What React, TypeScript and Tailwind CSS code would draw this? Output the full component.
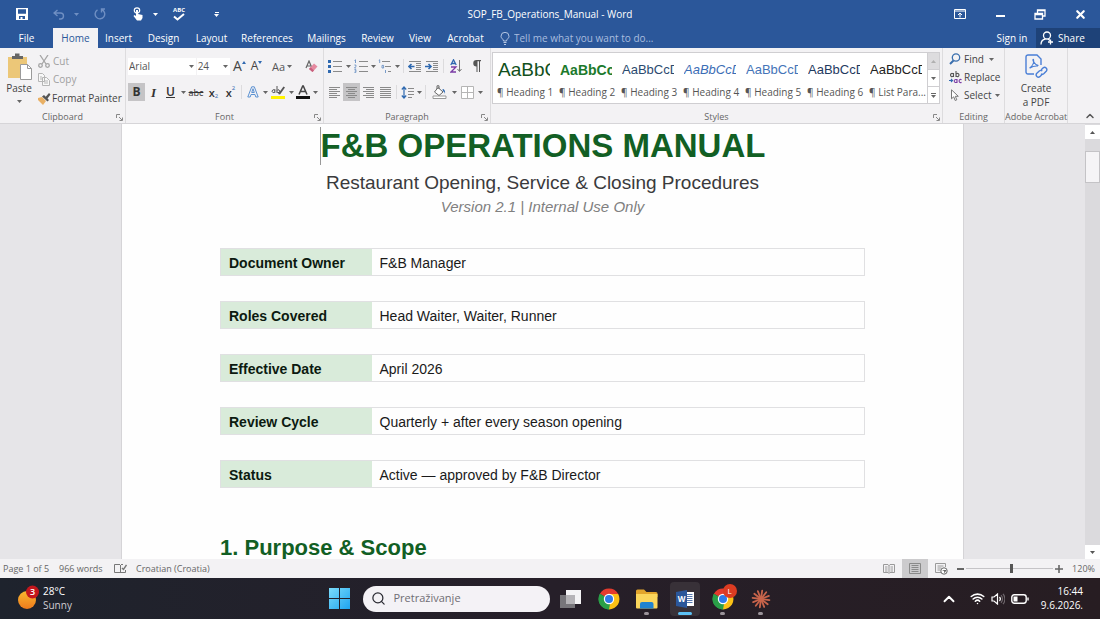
import React from "react";
import clsx from "clsx";
import { ChevronUp, Search, Wifi, X } from "lucide-react";

const tabs = [
  { name: "File", width: "w-[53px]" },
  { name: "Home", width: "w-[45px]" },
  { name: "Insert", width: "w-[41px]" },
  { name: "Design", width: "w-[49px]" },
  { name: "Layout", width: "w-[47px]" },
  { name: "References", width: "w-[64px]" },
  { name: "Mailings", width: "w-[55px]" },
  { name: "Review", width: "w-[47px]" },
  { name: "View", width: "w-[38px]" },
  { name: "Acrobat", width: "w-[53px]" },
];

const styleGallery = [
  { name: "Heading 1", preview: "AaBbCc", look: "text-[19px] text-[#12501c]" },
  { name: "Heading 2", preview: "AaBbCc", look: "text-[14px] font-bold text-[#1c7a2c]" },
  { name: "Heading 3", preview: "AaBbCcDd", look: "text-[13px] text-[#2b4a6f]" },
  { name: "Heading 4", preview: "AaBbCcDd", look: "text-[13px] italic text-[#3a6db5]" },
  { name: "Heading 5", preview: "AaBbCcDd", look: "text-[13px] text-[#4474b8]" },
  { name: "Heading 6", preview: "AaBbCcDd", look: "text-[13px] text-[#1f3a5f]" },
  { name: "List Para...", preview: "AaBbCcDd", look: "text-[13px] text-[#222222]" },
];

const details = [
  { label: "Document Owner", value: "F&B Manager" },
  { label: "Roles Covered", value: "Head Waiter, Waiter, Runner" },
  { label: "Effective Date", value: "April 2026" },
  { label: "Review Cycle", value: "Quarterly + after every season opening" },
  { label: "Status", value: "Active — approved by F&B Director" },
];

type ToolProps = {
  label: string;
  className?: string;
  active?: boolean;
  children: React.ReactNode;
};

const Tool = ({ label, className = "w-[17px]", active, children }: ToolProps) => (
  <button
    aria-label={label}
    aria-pressed={active}
    className={clsx(
      "flex h-[18px] shrink-0 items-center justify-center leading-none",
      active && "bg-[#c5c4c6]",
      className,
    )}
  >
    {children}
  </button>
);

const Caret = ({ className = "text-[#666666]" }: { className?: string }) => (
  <svg width="5" height="3" viewBox="0 0 5 3" className={clsx("shrink-0", className)}>
    <path d="M0 0h5L2.5 3z" fill="currentColor" />
  </svg>
);

const Drop = ({ label }: { label: string }) => (
  <Tool label={label} className="w-2">
    <Caret />
  </Tool>
);

const Divider = ({ className = "mx-[3px]" }: { className?: string }) => (
  <span className={clsx("h-3.5 w-px shrink-0 bg-[#dcdbdd]", className)} />
);

type GroupProps = {
  name: string;
  className?: string;
  launcher?: boolean;
  children: React.ReactNode;
};

const Group = ({ name, className, launcher, children }: GroupProps) => (
  <section
    aria-label={name}
    className={clsx("flex flex-col border-r border-[#dddcde]", className)}
  >
    <div className="flex-1">{children}</div>
    <div className="flex h-3 items-center text-[9px] leading-3 text-[#666666]">
      {launcher ? <span className="w-3" /> : null}
      <span className="flex-1 text-center whitespace-nowrap">{name}</span>
      {launcher ? (
        <button aria-label={`${name} settings`} className="flex w-3 justify-center">
          <svg width="7" height="7" viewBox="0 0 7 7" fill="none" stroke="#888888">
            <path d="M.5 4V.5H4M3 3l3 3M6.5 3.5v3h-3" />
          </svg>
        </button>
      ) : null}
    </div>
  </section>
);

type LinesProps = { rows: [number, number][] };

// Each row is the start and end of one text line, 2px apart.
const Lines = ({ rows }: LinesProps) => (
  <svg width="13" height="13" viewBox="0 0 13 13" stroke="#8a8a8a">
    {rows.map(([from, to], i) => (
      <path key={i} d={`M${from} ${i * 2 + 1.5}H${to}`} />
    ))}
  </svg>
);

const ListIcon = ({ kind }: { kind: "bullet" | "number" | "multi" }) => (
  <svg width="14" height="14" viewBox="0 0 14 14">
    {kind === "multi" ? (
      <path d="M4 2.5h8M7 7.5h6M10 12.5h3" stroke="#8a8a8a" />
    ) : (
      <path d="M5 2.5h9M5 7.5h9M5 12.5h9" stroke="#8a8a8a" />
    )}
    {kind === "bullet" ? (
      <path d="M0 1h3v3H0zM0 6h3v3H0zM0 11h3v3H0z" fill="#2f69b0" />
    ) : null}
    {kind === "number" ? (
      <path
        d="M.5 1.5l1-.7V4M.4 6h1.5v1.4L.5 9h1.6M.4 10.6h1.5V13.4H.4M.8 12h1"
        fill="none"
        stroke="#5b87bf"
        strokeWidth=".8"
      />
    ) : null}
    {kind === "multi" ? (
      <path
        d="M.8 1.3l.9-.5V4M4 6.4h1.6V9H4zM7.5 11v3"
        fill="none"
        stroke="#5b87bf"
        strokeWidth=".8"
      />
    ) : null}
  </svg>
);

const IndentIcon = ({ increase }: { increase?: boolean }) => (
  <svg width="14" height="13" viewBox="0 0 14 13" fill="none">
    <path d="M1 1.5h12M8 3.5h5M8 5.5h5M8 7.5h5M8 9.5h5M1 11.5h12" stroke="#8a8a8a" />
    <path
      d={increase ? "M0 6.5h5.5M3.5 4l2.5 2.5L3.5 9" : "M1 6.5h5.5M3.5 4L1 6.5 3.5 9"}
      stroke="#2f69b0"
      strokeWidth="1.6"
    />
  </svg>
);

const ChromeIcon = () => (
  <svg width="22" height="22" viewBox="0 0 22 22">
    <path d="M11 11L1.9 5.8A10.5 10.5 0 0 1 20.1 5.8z" fill="#e33b2e" />
    <path d="M11 11L20.1 5.8A10.5 10.5 0 0 1 11 21.5z" fill="#fbc116" />
    <path d="M11 11v10.5A10.5 10.5 0 0 1 1.9 5.8z" fill="#2a9f48" />
    <path d="M11 6h9.2L15.5 13.5 11 21.5 13 15z" fill="#fbc116" />
    <path d="M1.9 5.8L6.6 13.5 12 16 11 21.5A10.5 10.5 0 0 1 1.9 5.8z" fill="#2a9f48" />
    <circle cx="11" cy="11" r="5.2" fill="#fff" />
    <circle cx="11" cy="11" r="4" fill="#2f7be8" />
  </svg>
);

const TitleBar = () => (
  <header className="flex h-7 items-center text-white">
    <div className="flex flex-1 items-center">
      <button aria-label="Save" className="flex w-11 justify-center">
        <svg width="12" height="12" viewBox="0 0 12 12">
          <path
            d="M0 0h12v12H0zM2 1.2v4.6h8V1.2zM3 8v3h1.5V9h2v2H9V8z"
            fill="#fff"
            fillRule="evenodd"
          />
        </svg>
      </button>
      <button aria-label="Undo" className="flex w-[30px] justify-center text-[#6f8fc3]">
        <svg width="12" height="11" viewBox="0 0 12 11" fill="none" stroke="currentColor" strokeWidth="1.4">
          <path d="M4.5 1L1 4l3.5 3M1 4h6.5a3 3 0 0 1 0 6H6" />
        </svg>
      </button>
      <Caret className="text-[#6f8fc3]" />
      <button aria-label="Repeat" className="ml-1.5 flex w-[30px] justify-center text-[#6f8fc3]">
        <svg width="12" height="12" viewBox="0 0 12 12" fill="none" stroke="currentColor" strokeWidth="1.4">
          <path d="M7.5 1.5a4.8 4.8 0 1 1-4 .4M7.5 4.5V1H11" />
        </svg>
      </button>
      <button aria-label="Touch mode" className="ml-2 flex w-[30px] justify-center">
        <svg width="13" height="14" viewBox="0 0 13 14">
          <circle cx="5" cy="3.5" r="2.7" fill="none" stroke="#fff" strokeWidth="1.2" />
          <path d="M4 3h2v4l4.5 1v3L9 13.5H5L1.5 9l1-1L4 9z" fill="#fff" />
        </svg>
      </button>
      <Caret className="text-white" />
      <button aria-label="Spelling" className="ml-1.5 flex w-[30px] flex-col items-center">
        <span className="text-[6px] leading-[6px] font-bold">ABC</span>
        <svg width="12" height="8" viewBox="0 0 12 8" fill="none" stroke="#fff" strokeWidth="2">
          <path d="M1 3.5l3.5 3L11 1" />
        </svg>
      </button>
      <button aria-label="Customize toolbar" className="ml-5 flex flex-col items-center gap-px">
        <span className="h-px w-1 bg-white" />
        <Caret className="text-white" />
      </button>
    </div>
    <h1 className="text-[10px] font-medium">SOP_FB_Operations_Manual - Word</h1>
    <div className="flex flex-1 items-center justify-end">
      <button aria-label="Ribbon display options" className="flex w-10 justify-center">
        <svg width="12" height="10" viewBox="0 0 12 10" fill="none" stroke="#fff">
          <path d="M.5 .5h11v9H.5zM.5 2h11M6 8.500V4M4 6l2-2 2 2" />
        </svg>
      </button>
      <button aria-label="Minimize" className="flex w-10 justify-center">
        <span className="mt-1 h-0.5 w-[9px] bg-white" />
      </button>
      <button aria-label="Restore" className="flex w-10 justify-center">
        <svg width="12" height="11" viewBox="0 0 12 11" fill="none" stroke="#fff" strokeWidth="1.3">
          <path d="M1 4.5h7.5V10H1zM3.5 4V1H11v6H8.5M1 5.5h7.5M3.5 1.7H11" />
        </svg>
      </button>
      <button aria-label="Close" className="flex w-10 justify-center">
        <X size={13} strokeWidth={4} />
      </button>
    </div>
  </header>
);

const TabBar = () => (
  <nav className="flex h-5 items-stretch text-[10px] font-medium text-white">
    {tabs.map((tab) => (
      <button
        key={tab.name}
        className={clsx(
          "shrink-0 text-center",
          tab.width,
          tab.name === "Home" && "bg-[#f3f2f4] text-[#2b579a]",
        )}
      >
        {tab.name}
      </button>
    ))}
    <label className="ml-2 flex flex-1 items-center gap-1">
      <svg width="10" height="13" viewBox="0 0 10 13" fill="none" stroke="#b5c6e3" className="shrink-0">
        <path d="M3.5 9C3.5 7 1 6.5 1 4.3a4 4 0 0 1 8 0C9 6.5 6.5 7 6.5 9zM3.5 10.5h3M4 12.5h2" />
      </svg>
      <input
        aria-label="Tell me what you want to do"
        placeholder="Tell me what you want to do..."
        className="w-full font-normal outline-none placeholder:text-[#a9bddf]"
      />
    </label>
    <button className="w-12 text-center">Sign in</button>
    <button className="flex w-16 items-center gap-1 bg-[#1e4278] pl-1">
      <svg width="14" height="14" viewBox="0 0 14 14" fill="none" stroke="#fff" strokeWidth="1.3">
        <circle cx="7" cy="4.5" r="3.5" />
        <path d="M1 13.5c0-3 2-5 4.5-5.5M8 8l2 1.5M10.5 8.5v5M8 11h5" />
      </svg>
      Share
    </button>
  </nav>
);

const ClipboardGroup = () => (
  <Group name="Clipboard" launcher className="w-[126px]">
    <div className="flex pt-1">
      <button className="flex w-[38px] flex-col items-center text-[10px] leading-4 text-[#444444]">
        <svg width="26" height="27" viewBox="0 0 26 27" className="mt-px ml-0.5">
          <path d="M1 4h19v21H1z" fill="#ecc778" />
          <path d="M5 3h3V.5h4.5V3H16v3H5z" fill="#666666" />
          <path d="M13.5 11.5h7l4 4v11h-11z" fill="#fff" stroke="#9a9a9a" />
          <path d="M20.5 11.5v4h4" fill="none" stroke="#9a9a9a" />
        </svg>
        Paste
        <span className="flex h-2.5 items-center">
          <Caret />
        </span>
      </button>
      <div className="flex flex-col text-[10px] whitespace-nowrap text-[#a0a0a0]">
        <button className="flex h-[18px] items-center gap-[3px]">
          <svg width="12" height="13" viewBox="0 0 12 13" fill="none" stroke="#a5a5a5" strokeWidth="1.3">
            <path d="M2 0l6 9M10 0L4 9" />
            <circle cx="2.5" cy="10.5" r="1.8" />
            <circle cx="9.5" cy="10.5" r="1.8" />
          </svg>
          Cut
        </button>
        <button className="flex h-[19px] items-center gap-[3px]">
          <svg width="12" height="13" viewBox="0 0 12 13" fill="#f8f8f8" stroke="#b5b5b5">
            <path d="M.5 .5h4l2 2v6h-6zM4.5 4.5h4l3 3v5h-7zM6 8h4M6 10h4M2 4h2M2 6h2" />
          </svg>
          Copy
        </button>
        <button className="flex h-[19px] items-center gap-px text-[#444444]">
          <svg width="13" height="12" viewBox="0 0 13 12">
            <path d="M0 5l4-1 4 4-3 4-5-5z" fill="#e9b065" />
            <path d="M4 3.5L6 2l5 5-1.5 1.5zM7.5 4L11 0l1.5 1.500L9.5 5.5z" fill="#555555" />
          </svg>
          Format Painter
        </button>
      </div>
    </div>
  </Group>
);

const Picker = ({ label, value, className }: { label: string; value: string; className: string }) => (
  <span className={clsx("relative mr-px flex h-[17px] items-center bg-white", className)}>
    <select
      aria-label={label}
      className="h-full w-full appearance-none pl-px text-[10px] text-[#555555]"
    >
      <option>{value}</option>
    </select>
    <span className="pointer-events-none absolute right-0.5">
      <Caret />
    </span>
  </span>
);

const FontGroup = () => (
  <Group name="Font" launcher className="w-[198px]">
    <div className="flex h-[35px] items-center pt-px pl-0.5">
      <Picker label="Font" value="Arial" className="w-[69px]" />
      <Picker label="Font size" value="24" className="w-[34px]" />
      <Tool label="Grow font">
        <span className="text-[14px] text-[#444444]">A</span>
        <svg width="4" height="3" viewBox="0 0 4 3" className="mb-2">
          <path d="M0 3h4L2 0z" fill="#2f69b0" />
        </svg>
      </Tool>
      <Tool label="Shrink font">
        <span className="text-[12px] text-[#444444]">A</span>
        <svg width="4" height="3" viewBox="0 0 4 3" className="mb-2">
          <path d="M0 0h4L2 3z" fill="#2f69b0" />
        </svg>
      </Tool>
      <Tool label="Change case" className="w-[34px] gap-0.5">
        <span className="text-[11px] text-[#555555]">Aa</span>
        <Caret />
      </Tool>
      <Tool label="Clear formatting" className="w-6">
        <svg width="13" height="13" viewBox="0 0 13 13">
          <path d="M1 8l3-7 3 7M2 6h4" fill="none" stroke="#666666" strokeWidth="1.2" />
          <path d="M9 3.5l3.5 3-5 5.5L4 9z" fill="#e58aa0" />
          <path d="M5.5 7.3L9 10.4l-1.5 1.6L4 9z" fill="#c8607d" />
        </svg>
      </Tool>
    </div>
    <div className="flex items-center pl-0.5 text-[#333333]">
      <Tool label="Bold" active>
        <span className="text-[12px] font-bold">B</span>
      </Tool>
      <Tool label="Italic">
        <span className="font-['Liberation_Serif',serif] text-[13px] font-bold italic">I</span>
      </Tool>
      <Tool label="Underline">
        <span className="text-[12px] font-semibold underline">U</span>
      </Tool>
      <Drop label="Underline style" />
      <Tool label="Strikethrough" className="w-[18px]">
        <span className="text-[9px] line-through">abc</span>
      </Tool>
      <Tool label="Subscript">
        <span className="text-[11px] font-semibold">x</span>
        <span className="mt-2 text-[6px] text-[#2f69b0]">2</span>
      </Tool>
      <Tool label="Superscript">
        <span className="text-[11px] font-semibold">x</span>
        <span className="mb-2 text-[6px] text-[#2f69b0]">2</span>
      </Tool>
      <Divider className="mr-[3px] ml-0.5" />
      <Tool label="Text effects" className="w-4">
        <svg width="12" height="12" viewBox="0 0 12 12" fill="none" stroke="#5c92d2" strokeLinejoin="round">
          <path d="M.8 11L4.7 .8h2.6L11.2 11H8.8L8 8.5H4L3.2 11zM4.7 6.5h2.6L6 2.7z" />
        </svg>
      </Tool>
      <Drop label="Text effects menu" />
      <Tool label="Highlight" className="w-[18px]">
        <svg width="14" height="14" viewBox="0 0 14 14">
          <path d="M0 11h14v3H0z" fill="#fff200" />
          <path
            d="M3.8 4v4M3.8 6.8a1.4 1.4 0 1 1 0-1.200M6 1v7M6 6.8a1.4 1.4 0 1 0 0-1.200"
            fill="none"
            stroke="#555555"
          />
          <path d="M7 9l5.5-7.500 1.5 1L9 9.5z" fill="#555555" />
        </svg>
      </Tool>
      <Drop label="Highlight colour" />
      <Tool label="Font colour" className="w-4">
        <svg width="14" height="14" viewBox="0 0 14 14">
          <path d="M0 11h14v3H0z" fill="#111111" />
          <path d="M3 9.5L6.7 1h.6L11 9.5M4.5 6.5h5" fill="none" stroke="#444444" strokeWidth="1.5" />
        </svg>
      </Tool>
      <Drop label="Font colour menu" />
    </div>
  </Group>
);

const ParagraphGroup = () => (
  <Group name="Paragraph" launcher className="w-[167px]">
    <div className="flex h-[35px] items-center pt-px pl-0.5">
      <Tool label="Bullets" className="w-[18px]">
        <ListIcon kind="bullet" />
      </Tool>
      <Drop label="Bullet library" />
      <Tool label="Numbering">
        <ListIcon kind="number" />
      </Tool>
      <Drop label="Numbering library" />
      <Tool label="Multilevel list" className="w-4">
        <ListIcon kind="multi" />
      </Tool>
      <Drop label="List library" />
      <Divider className="mx-0.5" />
      <Tool label="Decrease indent">
        <IndentIcon />
      </Tool>
      <Tool label="Increase indent">
        <IndentIcon increase />
      </Tool>
      <Divider />
      <Tool label="Sort">
        <svg width="12" height="14" viewBox="0 0 12 14" fill="none">
          <path d="M.8 6L3.5 .8 6.2 6M1.5 4.5h4" stroke="#2f69b0" strokeWidth="1.3" />
          <path d="M1 8h5l-5 5h5" stroke="#7c3da5" strokeWidth="1.3" />
          <path d="M9.5 1v11M7.5 10l2 2.5 2-2.500" stroke="#777777" />
        </svg>
      </Tool>
      <Tool label="Show marks" className="w-6">
        <svg width="9" height="12" viewBox="0 0 9 12">
          <path d="M4 0h5v1.2H8V12H7V1.2H5.5V12h-1V6.5a3.2 3.2 0 0 1 0-6.500z" fill="#555555" />
        </svg>
      </Tool>
    </div>
    <div className="flex items-center pl-0.5">
      <Tool label="Align left">
        <Lines rows={[[1, 12], [1, 9], [1, 12], [1, 9], [1, 12], [1, 9]]} />
      </Tool>
      <Tool label="Centre" active>
        <Lines rows={[[1, 12], [3, 10], [1, 12], [3, 10], [1, 12], [3, 10]]} />
      </Tool>
      <Tool label="Align right">
        <Lines rows={[[1, 12], [4, 12], [1, 12], [4, 12], [1, 12], [4, 12]]} />
      </Tool>
      <Tool label="Justify">
        <Lines rows={[[1, 12], [1, 12], [1, 12], [1, 12], [1, 12], [1, 12]]} />
      </Tool>
      <Divider className="mx-0.5" />
      <Tool label="Line spacing" className="w-4">
        <svg width="13" height="13" viewBox="0 0 13 13" fill="none">
          <path
            d="M3 1v11M.8 3.5L3 1l2.2 2.5M.8 9.5L3 12l2.2-2.500"
            stroke="#2f69b0"
            strokeWidth="1.2"
          />
          <path d="M7 2.5h6M7 5.5h6M7 8.5h6M7 11.5h4" stroke="#8a8a8a" />
        </svg>
      </Tool>
      <Drop label="Line spacing menu" />
      <Divider className="mx-0.5" />
      <Tool label="Shading" className="w-[22px]">
        <svg width="15" height="14" viewBox="0 0 15 14">
          <path d="M1 11h13v2.5H1z" fill="#fff" stroke="#999999" />
          <path d="M6 2.5l5 4.5-4 3.5L2.5 7zM5 4V.8h2V4" fill="#fff" stroke="#666666" />
          <path d="M10.5 4c2 0 3 2 2.5 5-.5-2-1-2.500-2-2.500z" fill="#2f69b0" />
        </svg>
      </Tool>
      <Drop label="Shading menu" />
      <Tool label="Borders" className="w-[18px]">
        <svg width="13" height="13" viewBox="0 0 13 13" fill="#fff" stroke="#b5b5b5">
          <path d="M.5 .5h12v12H.5zM6.5 1v11M1 6.5h11" />
        </svg>
      </Tool>
      <Drop label="Borders menu" />
    </div>
  </Group>
);

const StylesGroup = () => (
  <Group name="Styles" launcher className="min-w-0 flex-1">
    <div className="mt-1 mr-0.5 ml-px flex h-[52px] border border-[#cfced1] bg-white">
      <div className="flex flex-1 overflow-hidden pl-1">
        {styleGallery.map((style) => (
          <button key={style.name} className="flex w-[62px] shrink-0 flex-col text-left">
            <span
              className={clsx(
                "ml-px h-[33px] w-[52px] overflow-hidden font-['Liberation_Sans',Arial,sans-serif] leading-[34px]",
                style.look,
              )}
            >
              {style.preview}
            </span>
            <span className="text-[10px] leading-3 whitespace-nowrap text-[#555555]">
              ¶ {style.name}
            </span>
          </button>
        ))}
      </div>
      <div className="flex w-3 flex-col divide-y divide-[#cfced1] border-l border-[#cfced1]">
        <button aria-label="Previous styles" className="flex flex-1 items-center justify-center bg-[#dddcde]">
          <Caret className="rotate-180 text-[#b0b0b0]" />
        </button>
        <button aria-label="Next styles" className="flex flex-1 items-center justify-center">
          <Caret />
        </button>
        <button aria-label="All styles" className="flex flex-1 flex-col items-center justify-center gap-px">
          <span className="h-px w-[5px] bg-[#666666]" />
          <Caret />
        </button>
      </div>
    </div>
  </Group>
);

const EditingGroup = () => (
  <Group name="Editing" className="w-[62px]">
    <div className="flex flex-col pt-0.5 pl-1.5 text-[10px] text-[#444444]">
      <button className="flex h-[18px] items-center gap-[3px]">
        <svg width="12" height="12" viewBox="0 0 12 12" fill="none" stroke="#3a6fae">
          <circle cx="7" cy="4.5" r="3.7" strokeWidth="1.3" />
          <path d="M4.5 7.5L1 11" strokeWidth="2" />
        </svg>
        Find
        <span className="ml-0.5">
          <Caret />
        </span>
      </button>
      <button className="flex h-[18px] items-center gap-0.5">
        <svg width="13" height="14" viewBox="0 0 13 14" fill="none" strokeWidth="1.1">
          <path
            d="M4.500 3v4M4.500 5.800a1.600 1.600 0 1 1 0-1.600M7 1v6M7 5.800a1.600 1.600 0 1 0 0-1.600"
            stroke="#555555"
          />
          <path
            d="M8 9v4M8 11.800a1.500 1.500 0 1 1 0-1.600M12.500 9.800a1.500 1.500 0 1 0 0 2.400"
            stroke="#7c3da5"
          />
          <path d="M0 10.500h3M2 9l1.500 1.500L2 12" stroke="#2f69b0" />
        </svg>
        Replace
      </button>
      <button className="flex h-[18px] items-center gap-[3px]">
        <svg width="12" height="12" viewBox="0 0 12 12" fill="#fff" stroke="#777777">
          <path d="M2.5 .8v9l2.2-2 1.5 3.7 1.6-.7-1.500-3.500h3z" />
        </svg>
        Select
        <Caret />
      </button>
    </div>
  </Group>
);

const AcrobatGroup = () => (
  <Group name="Adobe Acrobat" className="w-[63px]">
    <button className="flex w-full flex-col items-center pt-1.5 text-[10px] leading-[14px] text-[#444444]">
      <svg
        width="23"
        height="25"
        viewBox="0 0 23 25"
        fill="none"
        stroke="#4a7fd6"
        strokeWidth="1.4"
        className="mb-0.5"
      >
        <path d="M9 20H3a2 2 0 0 1-2-2V3a2 2 0 0 1 2-2h9l4 4v6" />
        <path d="M4.5 14c3-1.500 5-6 4-8.500-1.500-1 0 5 5 6M5 14c2-1.500 5-2.200 8-2" strokeWidth="1.1" />
        <path d="M16 16l2.2-2.200a2.300 2.300 0 0 1 3.200 3.200L19 19.500a2.300 2.300 0 0 1-3 .2M17.500 20l-2.700 2.700a2.300 2.300 0 0 1-3.200-3.200l2.700-2.500a2.300 2.300 0 0 1 3 0" />
      </svg>
      Create
      <span>a PDF</span>
    </button>
  </Group>
);

const Ribbon = () => (
  <div className="flex h-[76px] border-b border-[#d6d5d8] bg-[#f3f2f4]">
    <ClipboardGroup />
    <FontGroup />
    <ParagraphGroup />
    <StylesGroup />
    <EditingGroup />
    <AcrobatGroup />
    <div className="flex w-8 items-end justify-center pb-px pl-3">
      <button aria-label="Collapse ribbon">
        <ChevronUp size={12} strokeWidth={3} className="text-[#555555]" />
      </button>
    </div>
  </div>
);

const DocumentArea = () => (
  <div className="flex min-h-0 flex-1 bg-[#e6e5e8]">
    <main className="min-w-0 flex-1 overflow-hidden font-['Liberation_Sans',Arial,sans-serif]">
      <article className="mx-auto h-full max-w-[843px] overflow-hidden border-x border-[#d5d4d7] bg-[#fefefe] px-[98px] text-center">
        <h1 className="flex justify-center pt-[3px] text-[33px] leading-[38px] font-bold text-[#125f24]">
          <span className="border-l border-[#999999]">F&amp;B OPERATIONS MANUAL</span>
        </h1>
        <p className="mt-1 text-[19px] leading-7 text-[#3a3a3c]">
          Restaurant Opening, Service &amp; Closing Procedures
        </p>
        <p className="mt-px text-[15px] leading-[18px] text-[#808080] italic">
          Version 2.1 | Internal Use Only
        </p>
        <div className="mt-8 flex flex-col gap-[25px]">
          {details.map((row) => (
            <table
              key={row.label}
              className="h-7 w-full border-collapse border border-[#e0e0e2] text-left text-[14px] leading-5"
            >
              <tbody>
                <tr>
                  <th scope="row" className="w-[151px] bg-[#d9ebda] px-2 pt-0.5 font-bold text-[#0c1a10]">
                    {row.label}
                  </th>
                  <td className="px-2 pt-0.5 text-[#1a1a1a]">{row.value}</td>
                </tr>
              </tbody>
            </table>
          ))}
        </div>
        <h2 className="mt-[47px] text-left text-[22px] leading-[26px] font-bold text-[#125f24]">
          1. Purpose &amp; Scope
        </h2>
      </article>
    </main>
    <div className="flex w-[15px] flex-col bg-[#dbdadd] pt-px">
      <button aria-label="Scroll up" className="flex h-3.5 items-center justify-center bg-white">
        <Caret className="rotate-180 text-[#555555]" />
      </button>
      <div className="flex-1 pt-3">
        <div className="h-8 border border-[#c4c3c6] bg-[#f5f4f6]" />
      </div>
      <button aria-label="Scroll down" className="flex h-3.5 items-center justify-center bg-white">
        <Caret className="text-[#555555]" />
      </button>
    </div>
  </div>
);

const StatusBar = () => (
  <footer className="flex h-[19px] items-center bg-[#f3f2f4] text-[9px] text-[#666666]">
    <span className="ml-[3px] w-14">Page 1 of 5</span>
    <span className="w-[55px]">966 words</span>
    <svg width="13" height="11" viewBox="0 0 13 11" fill="none" stroke="#777777">
      <path d="M6 1.5H.5v8H6l.5 .5 .5-.5h4.5V7M6.5 2v8M7 1.5h2" />
      <path d="M8 5l1.5 1.5L12.5 2" strokeWidth="1.4" />
    </svg>
    <span className="ml-[9px] flex-1">Croatian (Croatia)</span>
    <button aria-label="Read mode" className="flex w-[26px] justify-center">
      <svg width="12" height="10" viewBox="0 0 12 10" fill="none" stroke="#9a9a9a">
        <path d="M.5 .5H5l1 1 1-1h4.500v8H7l-1 1-1-1H.5zM6 1v8M2 3h2.500M2 5h2.500M2 7h2.500M7.500 3H10M7.500 5H10M7.500 7H10" />
      </svg>
    </button>
    <button aria-label="Print layout" className="flex h-full w-[26px] items-center justify-center bg-[#cccbcd]">
      <svg width="12" height="11" viewBox="0 0 12 11" fill="none" stroke="#8a8a8a">
        <path d="M.5 .5h11v10H.5zM2.500 2.500h7M2.500 4.500h7M2.500 6.500h7M2.500 8.500h7" />
      </svg>
    </button>
    <button aria-label="Web layout" className="flex w-[26px] justify-center">
      <svg width="13" height="12" viewBox="0 0 13 12" fill="none" stroke="#9a9a9a">
        <path d="M6 9.500H.5v-9h10V4M2.500 3h6M2.500 5h4M2.500 7h3" />
        <circle cx="9" cy="8" r="3.200" fill="#fff" stroke="#666666" />
        <path d="M7 7l2 1 .5 2.500L11.500 7z" fill="#666666" stroke="none" />
      </svg>
    </button>
    <button aria-label="Zoom out" className="flex w-3 justify-center">
      <span className="h-0.5 w-[7px] bg-[#666666]" />
    </button>
    <input
      type="range"
      aria-label="Zoom"
      defaultValue={52}
      className="h-3 w-[87px] appearance-none bg-transparent [&::-webkit-slider-runnable-track]:h-px [&::-webkit-slider-runnable-track]:bg-[#c5c4c7] [&::-webkit-slider-thumb]:-mt-1 [&::-webkit-slider-thumb]:h-[9px] [&::-webkit-slider-thumb]:w-[3px] [&::-webkit-slider-thumb]:appearance-none [&::-webkit-slider-thumb]:bg-[#555555]"
    />
    <button aria-label="Zoom in" className="flex w-3 justify-center">
      <svg width="8" height="8" viewBox="0 0 8 8" stroke="#666666" strokeWidth="1.6">
        <path d="M0 4h8M4 0v8" />
      </svg>
    </button>
    <span className="w-[35px] pr-[5px] text-right">120%</span>
  </footer>
);

type TaskProps = { label: string; running?: boolean; focused?: boolean; children: React.ReactNode };

const Task = ({ label, running, focused, children }: TaskProps) => (
  <button
    aria-label={label}
    className="relative flex h-full w-[38px] shrink-0 items-center justify-center"
  >
    <span
      className={clsx(
        "flex h-[34px] w-[30px] items-center justify-center rounded",
        focused && "bg-[#383138]",
      )}
    >
      {children}
    </span>
    {running ? <span className="absolute bottom-1 h-[3px] w-[5px] rounded-full bg-[#9b949a]" /> : null}
    {focused ? <span className="absolute bottom-1 h-[3px] w-3.5 rounded-full bg-[#5cc1f5]" /> : null}
  </button>
);

const burst = Array.from({ length: 12 }, (_, i) => i * 30);

const Taskbar = () => (
  <footer className="flex h-[41px] items-center bg-linear-to-r from-[#1e232d] via-[#261f29] to-[#271d22] text-[10px] text-white">
    <div className="flex flex-1 items-center">
      <button className="flex items-center gap-1 pb-0.5 pl-[17px] text-left">
        <svg width="22" height="26" viewBox="0 0 22 26">
          <defs>
            <linearGradient id="sun" x1="0" y1="0" x2="0" y2="1">
              <stop offset="0" stopColor="#f9b72f" />
              <stop offset="1" stopColor="#ee7a1c" />
            </linearGradient>
          </defs>
          <circle cx="10" cy="15" r="9" fill="url(#sun)" />
          <circle cx="15.5" cy="7" r="6.5" fill="#c4161c" />
          <text x="15.5" y="10" fontSize="9" fontWeight="600" fill="#fff" textAnchor="middle">
            3
          </text>
        </svg>
        <span className="leading-3.5 font-medium">
          28°C
          <span className="block text-[#cfcdd2]">Sunny</span>
        </span>
      </button>
    </div>
    <div className="flex h-full items-center">
      <Task label="Start">
        <svg width="21" height="21" viewBox="0 0 21 21" className="shrink-0">
          <defs>
            <linearGradient id="start" x1="0" y1="0" x2="1" y2="1">
              <stop offset="0" stopColor="#7bdcfb" />
              <stop offset="1" stopColor="#1ea4f0" />
            </linearGradient>
          </defs>
          <path d="M0 0h10v10H0zM11 0h10v10H11zM0 11h10v10H0zM11 11h10v10H11z" fill="url(#start)" />
        </svg>
      </Task>
      <label className="mr-0.5 ml-1 flex h-[26px] w-[187px] items-center gap-2 rounded-full bg-[#f4f2f6] pl-2">
        <Search size={15} strokeWidth={2} className="shrink-0 text-[#2b2b33]" />
        <input
          aria-label="Pretraživanje"
          placeholder="Pretraživanje"
          className="w-full text-[11px] text-[#333333] outline-none placeholder:text-[#6f6d74]"
        />
      </label>
      <Task label="Task view">
        <svg width="22" height="20" viewBox="0 0 22 20" className="shrink-0">
          <path d="M0 6h15v13H0z" fill="#77757a" />
          <path d="M6 1h15v14H6z" fill="#f4f3f5" />
          <path d="M6 6h9v9H6z" fill="#b5b3b7" />
        </svg>
      </Task>
      <Task label="Chrome">
        <ChromeIcon />
      </Task>
      <Task label="File Explorer" running>
        <svg width="22" height="20" viewBox="0 0 22 20">
          <path d="M0 2a1.5 1.5 0 0 1 1.5-1.500H8L10.500 3H20a1.500 1.500 0 0 1 1.500 1.500V8H0z" fill="#e2a52c" />
          <path d="M0 5h21.500v13.500a1 1 0 0 1-1 1H1a1 1 0 0 1-1-1z" fill="#fbd65c" />
          <path d="M4 19.500V15a2 2 0 0 1 2-2h9.500a2 2 0 0 1 2 2v4.500z" fill="#1f83d0" />
        </svg>
      </Task>
      <Task label="Word" focused>
        <svg width="18" height="18" viewBox="0 0 18 18">
          <path d="M9 2h9v14H9z" fill="#fff" />
          <path
            d="M11 4.500h5.500M11 6.500h5.500M11 8.500h5.500M11 10.500h5.500M11 12.500h5.500"
            stroke="#2b579a"
            strokeWidth=".8"
          />
          <path d="M0 2l11-2v18L0 16z" fill="#2b579a" />
          <text x="5.5" y="12" fontSize="8" fontWeight="700" fill="#fff" textAnchor="middle">
            W
          </text>
        </svg>
      </Task>
      <Task label="Chrome, profile L" running>
        <ChromeIcon />
        <span className="absolute top-1.5 right-[5px] flex h-3.5 w-3.5 items-center justify-center rounded-full bg-[#dc3c22] text-[8px]">
          L
        </span>
      </Task>
      <Task label="Claude" running>
        <svg
          width="20"
          height="20"
          viewBox="-10 -10 20 20"
          stroke="#c9644b"
          strokeWidth="1.8"
          strokeLinecap="round"
        >
          {burst.map((angle) => (
            <path key={angle} d="M0 0V-8.500" transform={`rotate(${angle + 8})`} />
          ))}
        </svg>
      </Task>
    </div>
    <div className="flex flex-1 items-center justify-end">
      <button aria-label="Hidden icons" className="mr-3">
        <ChevronUp size={18} strokeWidth={2.5} />
      </button>
      <button aria-label="Network, volume and battery" className="mr-3 flex items-center gap-1.5">
        <Wifi size={15} strokeWidth={2.5} />
        <svg width="14" height="12" viewBox="0 0 14 12" fill="none" stroke="#fff" strokeWidth="1.2">
          <path d="M1 4h2l3.500-3v10L3 8H1z" />
          <path d="M8.500 4a3 3 0 0 1 0 4" />
          <path d="M10 2.200a5.500 5.500 0 0 1 0 7.600M12 .8a8 8 0 0 1 0 10.400" stroke="#6d666b" />
        </svg>
        <svg width="18" height="10" viewBox="0 0 18 10" fill="none" stroke="#fff" strokeWidth="1.4">
          <rect x=".8" y=".8" width="14.4" height="8.4" rx="2.4" />
          <path d="M17 3.500v3" />
          <path d="M2.500 2.500h4v5h-4z" fill="#fff" stroke="none" />
        </svg>
      </button>
      <button className="mr-[17px] pb-0.5 text-right leading-3.5 font-medium">
        16:44
        <span className="block">9.6.2026.</span>
      </button>
    </div>
  </footer>
);

export default function App() {
  return (
    <div className="flex h-screen flex-col overflow-hidden bg-[#2b579a] font-['Open_Sans','Noto_Sans',sans-serif]">
      <TitleBar />
      <TabBar />
      <Ribbon />
      <DocumentArea />
      <StatusBar />
      <Taskbar />
    </div>
  );
}
